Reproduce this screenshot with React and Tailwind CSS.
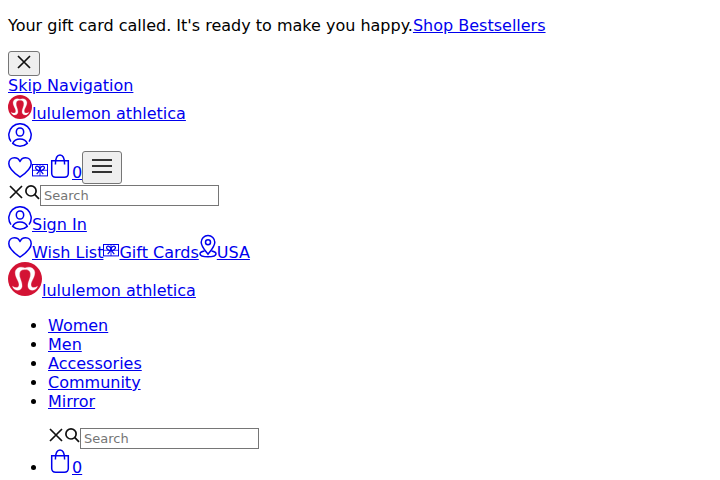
import React from "react";

const Link = ({ children, className = "" }) => (
  <a href="#" className={`block underline text-[#0000ee] ${className}`}>{children}</a>
);

const Close = ({ className = "" }) => (
  <svg viewBox="0 0 16 16" className={`block size-4 shrink-0 ${className}`} fill="none" stroke="#111" strokeWidth="1.7">
    <path d="M2 2 14 14M14 2 2 14" />
  </svg>
);

const Logo = ({ className }) => (
  <svg viewBox="0 0 34 34" className={`block shrink-0 mb-1 ${className}`}>
    <circle cx="17" cy="17" r="17" fill="#d31334" />
    <path
      d="M4.5 24.3C7.5 26.4 10.7 26 11 23C11.3 19.4 7 15.5 7.2 10.6C7.4 5.6 12.8 4 17 6C21.2 4 26.6 5.6 26.8 10.6C27 15.5 22.7 19.4 23 23C23.3 26 26.5 26.4 29.5 24.3C28.2 29.5 20.3 29.8 19.9 24.2C19.6 19.4 23.2 15.5 22.4 11.2C21.8 8.2 19.4 7.6 17 7.6C14.6 7.6 12.2 8.2 11.6 11.2C10.8 15.5 14.4 19.4 14.1 24.2C13.7 29.8 5.8 29.5 4.5 24.3Z"
      fill="#fff"
      stroke="#fff"
      strokeWidth=".3"
    />
  </svg>
);

const User = () => (
  <svg viewBox="0 0 24 24" className="block size-6 shrink-0 mb-1" fill="none" stroke="#0000ee" strokeWidth="1.5">
    <path d="M3 18.6A11.2 11.2 0 1 1 21 18.6" />
    <ellipse cx="12" cy="9" rx="3.7" ry="4.1" />
    <path d="M4.7 20.4C6 17.2 8.7 15.9 12 15.9S18 17.2 19.3 20.4C17.3 22.3 14.8 23.2 12 23.2S6.7 22.3 4.7 20.4Z" />
  </svg>
);

const Heart = ({ className = "mb-1" }) => (
  <svg viewBox="0 0 24 24" className={`block size-6 shrink-0 ${className}`} fill="none" stroke="#0000ee" strokeWidth="1.5" strokeLinejoin="round">
    <path d="M12 23.1C7.6 20 .8 15.3 .8 9.7C.8 6.2 3.2 3.7 6.5 3.7C9 3.7 11 5 12 7.6C13 5 15 3.7 17.5 3.7C20.8 3.7 23.2 6.2 23.2 9.7C23.2 15.3 16.4 20 12 23.1Z" />
  </svg>
);

const Gift = ({ className = "mb-1" }) => (
  <svg viewBox="0 0 16 16" className={`block size-4 shrink-0 ${className}`} fill="none" stroke="#0000ee" strokeWidth="1">
    <rect x=".5" y="2.5" width="15" height="11.4" />
    <path d="M0 8.3H16M8 2.5V14" strokeWidth=".8" />
    <path d="M8 8.2 4.7 12.2M8 8.2 11.3 12.2" strokeWidth="1.2" />
    <ellipse cx="5.8" cy="6.3" rx="2.5" ry="1.7" transform="rotate(42 5.8 6.3)" strokeWidth="1.2" />
    <ellipse cx="10.2" cy="6.3" rx="2.5" ry="1.7" transform="rotate(-42 10.2 6.3)" strokeWidth="1.2" />
  </svg>
);

const Bag = ({ className = "block mb-1" }) => (
  <svg viewBox="0 0 24 24" className={`size-6 shrink-0 ${className}`} fill="none" stroke="#0000ee" strokeWidth="1.5">
    <path d="M3.7 6.7H20.3V19.2Q20.3 23.2 16.3 23.2H7.7Q3.7 23.2 3.7 19.2Z" />
    <path d="M7.4 10.5C7.4 5 8.8 1 12 1S16.6 5 16.6 10.5" />
  </svg>
);

const Pin = () => (
  <svg viewBox="0 0 18 24" className="block w-[18px] h-6 shrink-0 mb-1" fill="none" stroke="#0000ee" strokeWidth="1.5">
    <path d="M9 20.2C6 16.5 2.2 12.5 2.2 8.3A6.8 6.8 0 0 1 15.8 8.3C15.8 12.5 12 16.5 9 20.2Z" />
    <circle cx="9" cy="8.2" r="2.5" />
    <path d="M5.5 17C2.8 17.5 1 18.5 1 19.8C1 21.8 4.6 22.8 9 22.8S17 21.8 17 19.8C17 18.5 15.2 17.5 12.5 17" />
  </svg>
);

const SearchRow = () => (
  <div className="flex h-[22px] items-start">
    <Close />
    <svg viewBox="0 0 16 16" className="block size-4 shrink-0" fill="none" stroke="#111" strokeWidth="1.7">
      <circle cx="7" cy="6.9" r="5.1" />
      <path d="M10.6 10.4 15 14.8" />
    </svg>
    <input
      placeholder="Search"
      className="mt-px block h-[21px] w-[179px] border border-[#767676] bg-white px-[3px] py-0 text-[13px] leading-[15px] placeholder:text-[#757575]"
    />
  </div>
);

export default function App() {
  return (
    <div className="h-[480px] overflow-hidden bg-white px-2 pt-4 text-base leading-[19px] text-black [font-family:'DejaVu_Sans',sans-serif]">
      <p className="mb-4 flex">
        <span>Your gift card called. It's ready to make you happy.</span>
        <Link>Shop Bestsellers</Link>
      </p>
      <button className="flex h-[25px] w-8 justify-center rounded-[3px] border border-[#767676] bg-[#efefef] pt-[2px]">
        <Close />
      </button>
      <div className="flex"><Link>Skip Navigation</Link></div>
      <div className="flex h-7 items-end"><Logo className="size-6" /><Link>lululemon athletica</Link></div>
      <div className="flex h-7 items-end"><User /></div>
      <div className="flex h-[33px] items-end">
        <Heart className="mb-1.5" />
        <Gift className="mb-1.5" />
        <Bag className="block mb-1.5" />
        <Link className="mb-0.5">0</Link>
        <button className="flex h-[33px] w-10 justify-center rounded-[3px] border border-[#767676] bg-[#efefef] pt-[2px]">
          <svg viewBox="0 0 24 24" className="block size-6" stroke="#333" strokeWidth="2">
            <path d="M2 6H22M2 12H22M2 18H22" />
          </svg>
        </button>
      </div>
      <SearchRow />
      <div className="flex h-7 items-end"><User /><Link>Sign In</Link></div>
      <div className="flex h-7 items-end">
        <Heart /><Link>Wish List</Link>
        <Gift /><Link>Gift Cards</Link>
        <Pin /><Link>USA</Link>
      </div>
      <div className="flex h-[38px] items-end"><Logo className="size-[34px]" /><Link>lululemon athletica</Link></div>
      <ul className="mt-4 list-disc pl-10">
        {["Women", "Men", "Accessories", "Community", "Mirror"].map((label) => (
          <li key={label}><a href="#" className="text-[#0000ee] underline">{label}</a></li>
        ))}
      </ul>
      <div className="mt-4 pl-10"><SearchRow /></div>
      <ul className="list-disc pl-10">
        <li className="h-7">
          <Bag className="inline-block align-baseline" />
          <a href="#" className="text-[#0000ee] underline">0</a>
        </li>
      </ul>
    </div>
  );
}
